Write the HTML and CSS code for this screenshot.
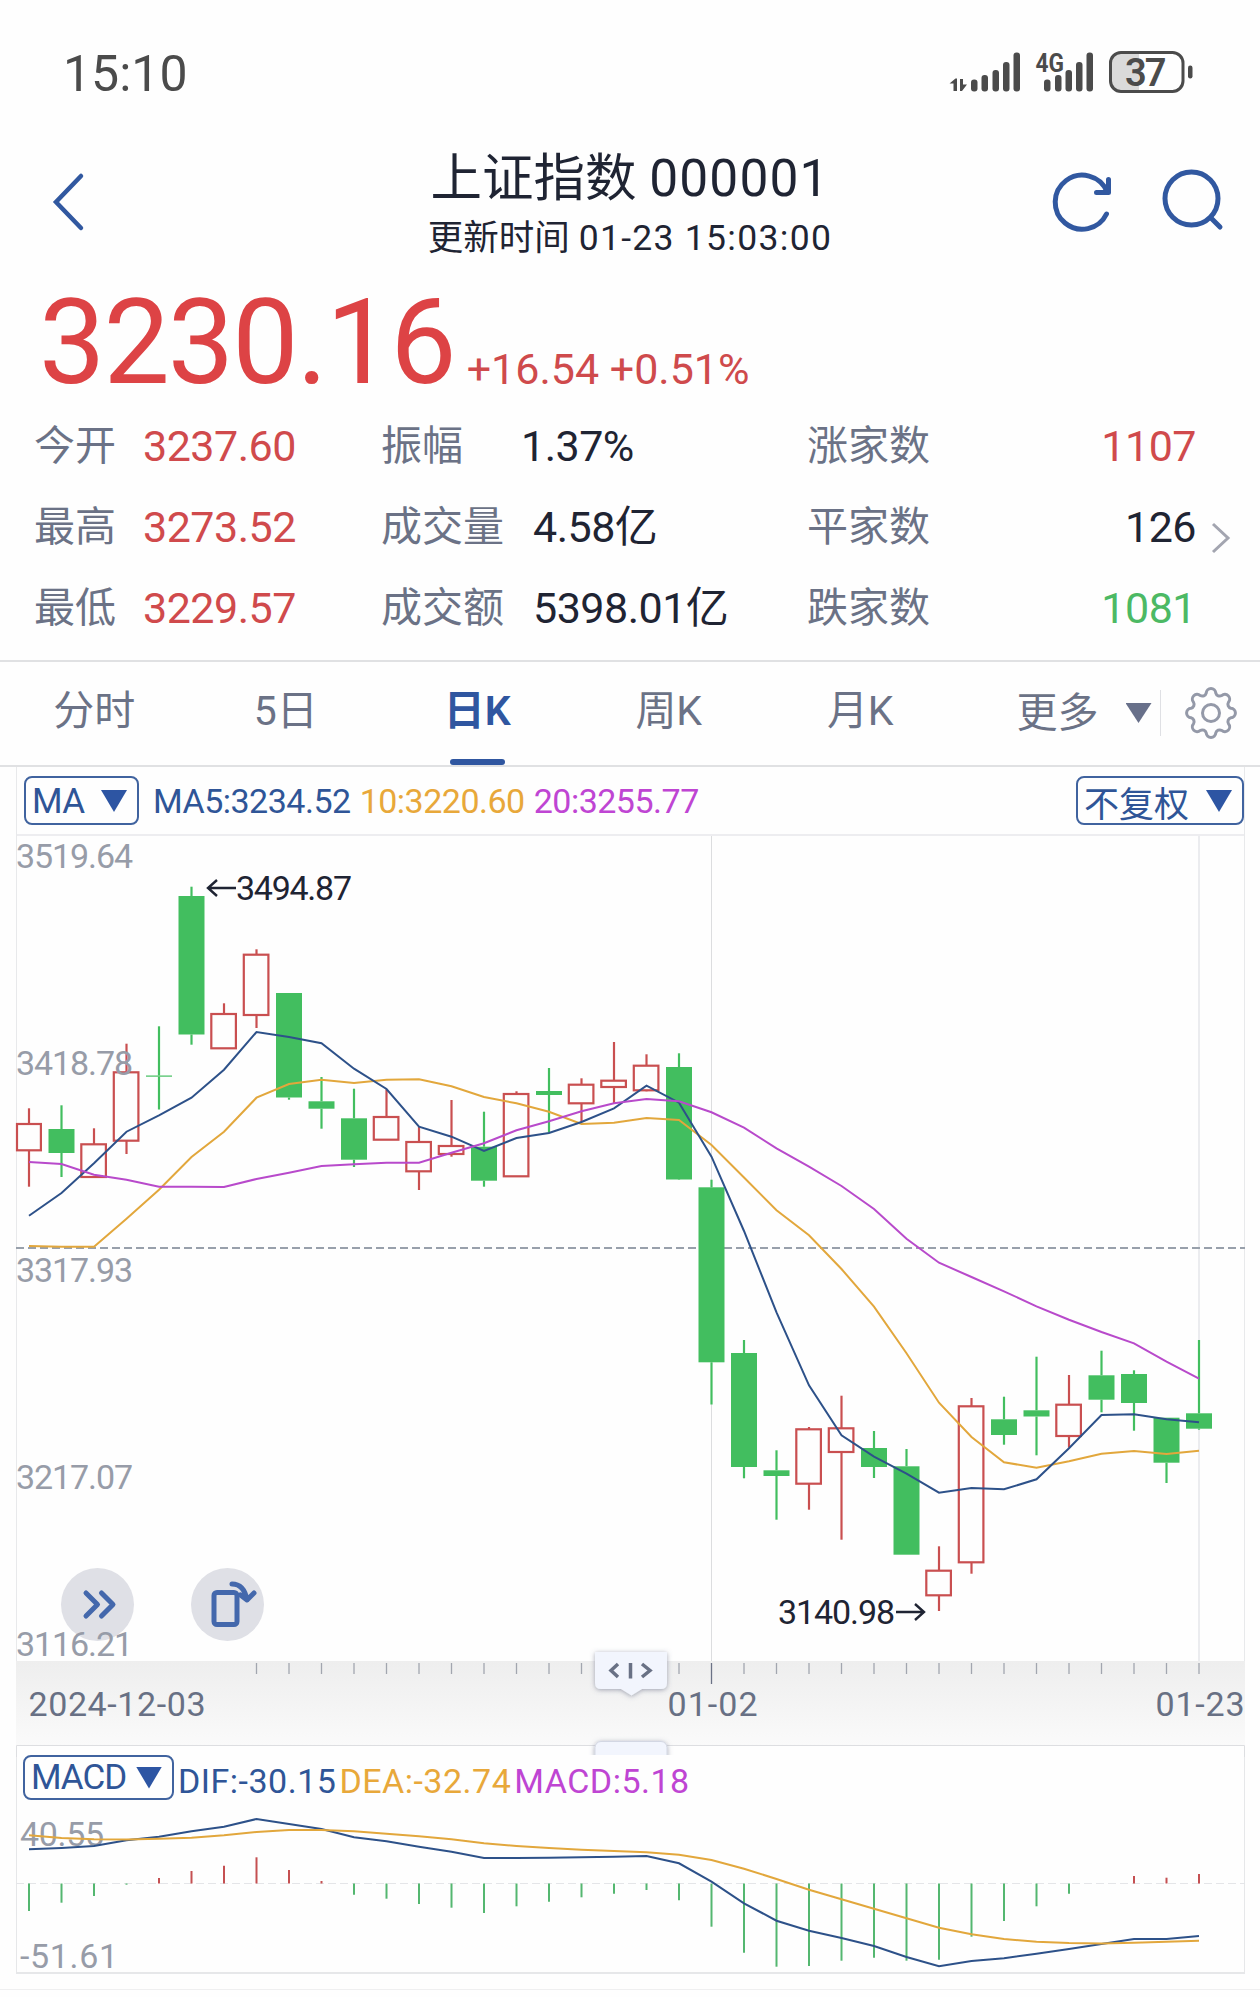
FILE: index.html
```html
<!DOCTYPE html>
<html lang="zh-CN">
<head>
  <meta charset="UTF-8">
  <title>上证指数 000001</title>
  <link rel="stylesheet" href="styles.css">
</head>
<body>
  <div class="status-bar">
    <span class="clock">15:10</span>
    <svg class="status-icons" width="250" height="50" viewBox="945 45 250 50">
      <g fill="#4b4b4b">
        <path d="M949.500 83.500 L955.5 78.5 H957 V91 H953.5 V83.5 Z M960 79 H963 V84.500 H967 L962 91 H960 Z"/>
        <rect x="971" y="79.500" width="6.500" height="12" rx="3"/>
        <rect x="981.500" y="75" width="6.500" height="16.500" rx="3"/>
        <rect x="992.500" y="70" width="6.500" height="21.500" rx="3"/>
        <rect x="1003" y="62" width="6.500" height="29.500" rx="3"/>
        <rect x="1013.500" y="52.500" width="6.500" height="39" rx="3"/>
        <rect x="1044" y="79.500" width="6.500" height="12" rx="3"/>
        <rect x="1055" y="75" width="6.500" height="16.500" rx="3"/>
        <rect x="1065.500" y="70" width="6.500" height="21.500" rx="3"/>
        <rect x="1076" y="62" width="6.500" height="29.500" rx="3"/>
        <rect x="1086.500" y="52.500" width="6.500" height="39" rx="3"/>
        <rect x="1188" y="65.500" width="4.500" height="13" rx="2.200"/>
      </g>
      <path d="M1121 52 H1139 V92 H1121 Q1110.500 92 1110.500 81 V63 Q1110.500 52 1121 52 Z" fill="#dadada"/>
      <rect x="1110.500" y="52.500" width="72.500" height="39" rx="10.500" fill="none" stroke="#4b4b4b" stroke-width="3"/>
      <text class="net" x="1035.500" y="71.500" textLength="28.500" lengthAdjust="spacingAndGlyphs">4G</text>
      <text class="battery" x="1125" y="85.500" textLength="41.500">37</text>
    </svg>
  </div>

  <div class="header">
    <svg class="back" width="34" height="58" viewBox="0 0 34 58"><path d="M30 3 L5 29 L30 55" fill="none" stroke="#3158a0" stroke-width="4.500" stroke-linecap="round"/></svg>
    <div class="title-box">
      <div class="title">上证指数 <span>000001</span></div>
      <div class="subtitle">更新时间 <span>01-23 15:03:00</span></div>
    </div>
    <svg class="header-icons" width="176" height="66" viewBox="1050 168 176 66" fill="none" stroke="#3158a0" stroke-width="5" stroke-linecap="round" stroke-linejoin="round">
      <path d="M1106.500 214 A27 27 0 1 1 1107 191.500 M1108.500 179.500 V192.500 H1096.500"/>
      <circle cx="1191.500" cy="198.500" r="26.500"/>
      <path d="M1211 218 L1220 227"/>
    </svg>
  </div>

  <div class="price">
    <span class="last">3230.16</span>
    <span class="change">+16.54 +0.51%</span>
  </div>

  <div class="quotes">
    <table class="quote-table">
      <tr><td class="c1">今开</td><td class="c2 up">3237.60</td><td class="c3">振幅</td><td class="c4 near">1.37%</td><td class="c5">涨家数</td><td class="c6 up">1107</td></tr>
      <tr><td class="c1">最高</td><td class="c2 up">3273.52</td><td class="c3">成交量</td><td class="c4">4.58亿</td><td class="c5">平家数</td><td class="c6">126</td></tr>
      <tr><td class="c1">最低</td><td class="c2 up">3229.57</td><td class="c3">成交额</td><td class="c4">5398.01亿</td><td class="c5">跌家数</td><td class="c6 down">1081</td></tr>
    </table>
    <svg class="more-arrow" width="22" height="34" viewBox="0 0 22 34"><path d="M3 3 L18 17 L3 31" fill="none" stroke="#a3a5b0" stroke-width="3"/></svg>
  </div>

  <div class="tabs">
    <div class="tab">分时</div>
    <div class="tab">5日</div>
    <div class="tab active">日K</div>
    <div class="tab">周K</div>
    <div class="tab">月K</div>
    <div class="tab-more">更多<i class="caret gray"></i></div>
    <svg class="gear" width="56" height="56" viewBox="-28 -28 56 56" fill="none" stroke="#9499a8" stroke-width="3" stroke-linejoin="round">
      <path id="gearPath"/>
      <circle r="8.500"/>
    </svg>
  </div>

  <div class="panel">
    <div class="legend">
      <div class="select">MA<i class="caret"></i></div>
      <span class="ma5">MA5:3234.52</span>
      <span class="ma10">10:3220.60</span>
      <span class="ma20">20:3255.77</span>
      <div class="select adjust">不复权<i class="caret"></i></div>
    </div>
    <div class="chart-box">
      <svg id="kline" class="kline" width="1229" height="825" viewBox="16 836 1229 825"></svg>
      <div class="round-btn fast">
        <svg width="35" height="31" viewBox="0 0 35 31"><path d="M4 4 L15.500 15.500 L4 27 M19.500 4 L31 15.500 L19.500 27"/></svg>
      </div>
      <div class="round-btn rotate">
        <svg width="56" height="62" viewBox="200 1574 56 62"><rect x="214" y="1592.500" width="23" height="32" rx="3"/><path d="M232 1584 Q244 1584 247 1600 M240.500 1595 L247 1600 L254 1593"/></svg>
      </div>
      <svg id="labels" class="labels" width="1229" height="825" viewBox="16 836 1229 825">
        <g class="axis-text">
          <text x="16" y="868" textLength="117">3519.64</text>
          <text x="16" y="1075" textLength="117">3418.78</text>
          <text x="16" y="1282" textLength="117">3317.93</text>
          <text x="16" y="1489" textLength="117">3217.07</text>
          <text x="16" y="1656" textLength="117">3116.21</text>
        </g>
        <g class="mark-text">
          <text x="236" y="900" textLength="116">3494.87</text>
          <text x="778" y="1624" textLength="117">3140.98</text>
        </g>
        <path class="mark-arrow" d="M236 888 H208 M217 880 L208 888 L217 896 M896 1612 H924 M915 1604 L924 1612 L915 1620"/>
      </svg>
    </div>
  </div>

  <svg id="timeAxis" class="time-axis" width="1229" height="96" viewBox="16 1661 1229 96">
    <defs>
      <linearGradient id="band" x1="0" y1="0" x2="0" y2="1">
        <stop offset="0" stop-color="#eeeeee"/>
        <stop offset="1" stop-color="#fafafa"/>
      </linearGradient>
    </defs>
    <rect x="16" y="1661" width="1229" height="84" fill="url(#band)"/>
    <g id="ticks"></g>
    <g class="date-text">
      <text x="28.500" y="1716" textLength="177">2024-12-03</text>
      <text x="667.500" y="1716" textLength="90">01-02</text>
      <text x="1155.500" y="1716" textLength="89">01-23</text>
    </g>
    <path d="M16.500 1757 V1745.500 H1244.500 V1757" fill="none" stroke="#dddee1"/>
  </svg>

  <div class="macd-panel">
    <div class="legend macd-legend">
      <div class="select">MACD<i class="caret"></i></div>
      <span class="ma5">DIF:-30.15</span>
      <span class="ma10">DEA:-32.74</span>
      <span class="ma20">MACD:5.18</span>
    </div>
    <svg id="macd" class="macd" width="1229" height="162" viewBox="16 1811 1229 162">
      <g class="axis-text">
        <text x="20" y="1846" textLength="84">40.55</text>
        <text x="20" y="1968" textLength="98">-51.61</text>
      </g>
    </svg>
    <svg class="handle" width="93" height="120" viewBox="584 1642 93 120">
      <defs>
        <filter id="soft" x="-20%" y="-30%" width="140%" height="170%"><feDropShadow dx="0" dy="1" stdDeviation="2.500" flood-color="#59607a" flood-opacity=".55"/></filter>
        <clipPath id="lower"><rect x="584" y="1730" width="93" height="25"/></clipPath>
      </defs>
      <path d="M595 1652 H667 V1683 Q667 1689 661 1689 H642 L631.500 1695.500 L621 1689 H601 Q595 1689 595 1683 Z" fill="#f2f5fd" filter="url(#soft)"/>
      <path d="M618 1664 L611 1670.500 L618 1677 M642 1664 L650 1670.500 L642 1677 M630.500 1663 V1678.500" fill="none" stroke="#697185" stroke-width="3.500"/>
      <g clip-path="url(#lower)"><rect x="595" y="1741.500" width="72" height="40" rx="6" fill="#f2f5fd" stroke="#d3d7e3" filter="url(#soft)"/></g>
    </svg>
  </div>
  <div class="footer-line"></div>

  <script src="chart.js"></script>
</body>
</html>
```
FILE: styles.css
```css
* {
  box-sizing: border-box;
}
body {
  margin: 0;
  width: 1260px;
  height: 1997px;
  overflow: hidden;
  background-color: #fefefe;
  font-family: Roboto, "Noto Sans CJK SC", sans-serif;
  color: #1f2433;
}
svg {
  display: block;
  overflow: visible;
}
.status-bar {
  display: flex;
  justify-content: space-between;
  height: 110px;
  padding: 45px 65px 0 63px;
}
.clock {
  font-size: 50px;
  line-height: 58px;
  color: #4b4b4b;
}
.net {
  font-size: 25px;
  font-weight: 700;
  fill: #4b4b4b;
}
.battery {
  font-size: 38px;
  font-weight: 600;
  fill: #4b4b4b;
}

/* header */
.header {
  display: grid;
  grid-template-columns: 1fr auto 1fr;
  height: 170px;
  padding: 36px 34px 0;
}
.back {
  margin: 27px 0 0 17px;
}
.title-box {
  text-align: center;
  white-space: nowrap;
}
.title {
  font-size: 51.5px;
  line-height: 66px;
}
.title span {
  letter-spacing: 1.1px;
}
.subtitle {
  font-size: 35.5px;
  line-height: 50px;
  margin-top: 1px;
}
.subtitle span {
  letter-spacing: 1.3px;
}
.header-icons {
  margin-top: 22px;
  justify-self: end;
}

.price {
  display: flex;
  align-items: baseline;
  height: 126px;
  padding-left: 39px;
}
.last {
  font-size: 118px;
  line-height: 126px;
  letter-spacing: -1.9px;
  color: #dd4345;
}
.change {
  position: relative;
  top: 1px;
  font-size: 43px;
  margin-left: 12px;
  color: #cf4a4c;
}

/* quote table */
.quotes {
  display: flex;
  align-items: center;
  height: 254px;
}
.quote-table {
  width: 1196px;
  height: 243px;
  margin-top: -12px;
  table-layout: fixed;
  border-collapse: collapse;
  font-size: 43px;
  line-height: 60px;
  letter-spacing: -0.5px;
  white-space: nowrap;
}
.quote-table td {
  padding: 0;
}
.quote-table .c1,
.quote-table .c3,
.quote-table .c5 {
  font-size: 41px;
  letter-spacing: 0;
  color: #6b7286;
}
.quote-table .c1 {
  width: 143px;
  padding-left: 34px;
}
.quote-table .c2 {
  width: 238px;
}
.quote-table .c3 {
  width: 152px;
}
.quote-table .c4 {
  width: 274px;
}
.quote-table .near {
  padding-right: 12px;
  text-indent: -12px;
}
.quote-table .c6 {
  text-align: right;
}
.quote-table .up {
  color: #d04a4c;
}
.quote-table .down {
  color: #4cb964;
}
.more-arrow {
  margin: 10px 0 0 14px;
}

/* period tabs */
.tabs {
  display: flex;
  height: 107px;
  border-top: 2px solid #e0e1e3;
  border-bottom: 2px solid #e0e1e3;
  font-size: 41px;
  line-height: 98px;
  color: #6b7286;
}
.tab {
  width: 191.5px;
  padding-right: 3px;
  text-align: center;
}
.tab.active {
  display: flex;
  flex-direction: column;
  align-items: center;
  color: #2f56a0;
  font-weight: 600;
}
.tab.active::after {
  content: "";
  width: 55px;
  height: 7px;
  margin-top: -1px;
  border-radius: 4px;
  background: #2f56a0;
}
.tab-more {
  display: flex;
  align-items: center;
  justify-content: space-between;
  width: 144px;
  height: 46px;
  margin: 28px 0 0 59px;
  padding-right: 8px;
  border-right: 1px solid #dfe0e4;
}
.gear {
  margin: 23px 0 0 22px;
}
.caret {
  width: 26px;
  height: 22px;
  background: #2d55a3;
  clip-path: polygon(0 0, 100% 0, 50% 100%);
}
.caret.gray {
  height: 20px;
  background: #68708a;
}

/* main chart */
.panel {
  width: 1229px;
  margin-left: 16px;
  border-left: 1px solid #e8e9eb;
  border-right: 1px solid #e8e9eb;
}
.legend {
  display: flex;
  align-items: center;
  height: 69px;
  border-bottom: 2px solid #ededf0;
  padding-left: 7px;
  font-size: 34px;
  letter-spacing: -0.5px;
  white-space: nowrap;
}
.select {
  display: flex;
  align-items: center;
  justify-content: space-between;
  width: 115px;
  height: 49px;
  margin-right: 14px;
  padding: 1px 10px 0 6px;
  border: 2px solid #40639f;
  border-radius: 8px;
  font-size: 35px;
  color: #2f5597;
}
.select.adjust {
  width: 168px;
  margin: 0 0 0 auto;
  letter-spacing: 0;
}
.ma5 {
  color: #2f5597;
}
.ma10 {
  margin-left: 9px;
  color: #e8a83a;
}
.ma20 {
  margin-left: 9px;
  color: #bf45d3;
}
.chart-box {
  position: relative;
  width: 1229px;
  height: 825px;
  margin-left: -1px;
}
.labels {
  position: absolute;
  left: 0;
  top: 0;
}
.round-btn {
  position: absolute;
  display: flex;
  align-items: center;
  justify-content: center;
  width: 73px;
  height: 73px;
  top: 732px;
  border-radius: 50%;
  background: #dfe0e6;
}
.round-btn svg {
  fill: none;
  stroke: #4468ac;
  stroke-width: 5;
  stroke-linecap: round;
  stroke-linejoin: round;
}
.fast {
  left: 45px;
  padding-left: 3px;
}
.rotate {
  left: 175px;
}
.axis-text {
  font-size: 34px;
  fill: #979ca8;
}
.mark-text {
  font-size: 34px;
  fill: #1f2433;
}
.mark-arrow {
  fill: none;
  stroke: #1f2433;
  stroke-width: 2.4;
}
.date-text {
  font-size: 34px;
  fill: #687084;
}
.time-axis {
  margin-left: 16px;
}

/* macd */
.macd-panel {
  position: relative;
  width: 1229px;
  height: 217px;
  margin-left: 16px;
  border: solid #e6e7e9;
  border-width: 0 1px 2px;
}
.macd-legend {
  height: 54px;
  padding: 0 0 6px 6px;
  border: 0;
  letter-spacing: 0.5px;
}
.macd-legend .select {
  width: 151px;
  height: 45px;
  margin: -8px 4px 0 0;
  letter-spacing: -1px;
}
.macd-legend .ma10,
.macd-legend .ma20 {
  margin-left: 3px;
}
.macd {
  margin-left: -1px;
}
.handle {
  position: absolute;
  left: 567px;
  top: -115px;
}
.footer-line {
  margin-top: 15px;
  height: 1px;
  background: #efeff0;
}
```
FILE: chart.js
```js
const NS = 'http://www.w3.org/2000/svg';
const GREEN = '#42be5f';
const RED = '#c94f50';
const x = i => 29 + i * 32.5;

function add(parent, tag, attrs) {
  const el = document.createElementNS(NS, tag);
  for (const k in attrs) el.setAttribute(k, attrs[k]);
  parent.appendChild(el);
  return el;
}

function line(parent, x1, y1, x2, y2, stroke, width, dash) {
  add(parent, 'line', { x1, y1, x2, y2, stroke, 'stroke-width': width, 'stroke-dasharray': dash || 'none' });
}

function curve(parent, ys, stroke) {
  const points = ys.map((y, i) => x(i) + ',' + y).join(' ');
  add(parent, 'polyline', { points, fill: 'none', stroke, 'stroke-width': 2 });
}

// up(1)/down(0), high, body top, body bottom, low
const candles = [
  [1, 1108.3, 1124, 1150.3, 1186.7], [0, 1105.3, 1129, 1153, 1177], [1, 1128.3, 1144.3, 1177, 1177],
  [1, 1043.7, 1072.3, 1140.7, 1154], [0, 1026.3, 1075.5, 1076.7, 1109.5], [0, 886.7, 896, 1034.5, 1044.7],
  [1, 1003.3, 1014, 1048.3, 1048.3], [1, 949.3, 954.7, 1015, 1028], [0, 993, 993, 1097.5, 1099.7],
  [0, 1077, 1101.3, 1108.7, 1128.7], [0, 1088.7, 1118.3, 1159.7, 1167], [1, 1089.3, 1117, 1139.7, 1139.7],
  [1, 1126.7, 1142, 1171.3, 1190], [1, 1100, 1146, 1154, 1156.7], [0, 1111.7, 1146.7, 1180.7, 1186.7],
  [1, 1091.3, 1094, 1176.3, 1177], [0, 1068, 1091, 1095, 1132.7], [1, 1078.3, 1084.7, 1103.3, 1122],
  [1, 1042, 1080.7, 1087, 1104], [1, 1054.3, 1065.7, 1090.3, 1091.3], [0, 1053.3, 1067, 1179.5, 1180],
  [0, 1179.7, 1187.3, 1362.3, 1404.5], [0, 1340, 1353, 1467, 1478.3], [0, 1450.3, 1470.3, 1476, 1519.7],
  [1, 1427, 1429.3, 1483.7, 1509.7], [1, 1395.7, 1428.3, 1452, 1539.7], [0, 1431, 1448, 1467, 1478],
  [0, 1449, 1466.3, 1554.7, 1554.7], [1, 1546.3, 1570.7, 1595.3, 1611], [1, 1398, 1406.3, 1562.3, 1573.7],
  [0, 1396.7, 1419.3, 1435, 1444.7], [0, 1356.7, 1410.3, 1416.5, 1455.3], [1, 1375, 1404.7, 1436, 1447.7],
  [0, 1350.7, 1375.3, 1399.7, 1412.3], [0, 1370.3, 1374, 1403, 1430.7], [0, 1417.7, 1417.7, 1462.7, 1483],
  [0, 1340, 1413.3, 1428.7, 1429.7]
];

const ma5 = [1215.7, 1193, 1163.3, 1131.7, 1115.3, 1097.7, 1069.7, 1032, 1037, 1043.3, 1068.7, 1089, 1126.7,
  1136.7, 1151, 1138, 1133, 1122, 1108.3, 1085.7, 1102.7, 1156.7, 1231, 1312.3, 1385.3, 1435.3, 1456.7,
  1473.7, 1492.7, 1488, 1489.3, 1479.3, 1448.3, 1415, 1414.3, 1419.3, 1422.3];
const ma10 = [1246, 1246.7, 1246.7, 1218.7, 1189.7, 1157, 1131.7, 1097.7, 1084, 1079.7, 1083, 1079.7, 1079.3,
  1086.3, 1097, 1103.3, 1111.7, 1124, 1122.7, 1118, 1120, 1145, 1177.5, 1210.3, 1235.3, 1269, 1306.7,
  1353.3, 1402.7, 1437, 1462.3, 1467.7, 1461.3, 1453.7, 1451, 1454, 1450.7];
const ma20 = [1162, 1164, 1174.7, 1179.7, 1186.7, 1186.7, 1187, 1179, 1172.7, 1166, 1164.3, 1162.7, 1162.7,
  1152.7, 1143.3, 1130.3, 1121.3, 1111.3, 1103.3, 1099, 1101.3, 1112.3, 1127.7, 1148.3, 1166.7, 1186, 1209,
  1238.7, 1262.7, 1277, 1291.3, 1306.3, 1319.7, 1332, 1343.3, 1361.7, 1378.7];

const kline = document.getElementById('kline');
line(kline, 711.5, 836, 711.5, 1661, '#dcdddf', 1);
line(kline, 1199, 836, 1199, 1661, '#ebecef', 2);
line(kline, 16, 1248, 1245, 1248, '#98a0ab', 2, '8 4');

candles.forEach(([up, high, top, bottom, low], i) => {
  const color = up ? RED : GREEN;
  if (top > high) line(kline, x(i), high, x(i), top, color, 2.2);
  if (low > bottom) line(kline, x(i), bottom, x(i), low, color, 2.2);
  if (up) {
    // the first body is cut by the left edge of the plot
    const left = Math.max(x(i) - 12.7, 17);
    add(kline, 'rect', { x: left, y: top, width: x(i) + 11.9 - left, height: bottom - top, fill: '#fefefe', stroke: color, 'stroke-width': 2.2 });
  } else {
    add(kline, 'rect', { x: x(i) - 13, y: top, width: 26, height: bottom - top, fill: color });
  }
});
curve(kline, ma10, '#e2a73c');
curve(kline, ma5, '#2d5189');
curve(kline, ma20, '#b84acb');

// time axis
const ticks = document.getElementById('ticks');
for (let i = 7; i < 37; i++) {
  const month = i === 21;
  line(ticks, x(i), 1663, x(i), month ? 1684 : 1674, month ? '#6b7286' : '#a2a6af', 1.3);
}

const dif = [1849.3, 1848, 1846, 1840.3, 1836.7, 1831.3, 1826.7, 1819, 1824, 1829, 1837.3, 1841.3, 1846.7,
  1851.7, 1858, 1858, 1857.8, 1857.3, 1856.7, 1856, 1863.3, 1881.7, 1903.3, 1920.7, 1930.7, 1938, 1946,
  1957, 1966.3, 1961, 1958.3, 1953.7, 1949, 1944, 1939, 1939, 1936];
const dea = [1835.3, 1838, 1839.3, 1839.5, 1838.7, 1837.7, 1835.3, 1832, 1830, 1830, 1831.3, 1833.7, 1836.3,
  1839.3, 1843.3, 1846, 1848, 1849.7, 1851, 1852.3, 1854.7, 1860, 1868.7, 1879, 1889.7, 1899.3, 1908.7,
  1918.3, 1927.7, 1934.3, 1939, 1941.7, 1943, 1943.5, 1942.7, 1941.7, 1940.7];
const bars = [1911, 1902.7, 1896, 1884.7, 1878, 1871, 1865.7, 1857.3, 1870, 1881, 1894.7, 1898.7, 1904,
  1907.7, 1913, 1906.3, 1901.7, 1897.3, 1893.7, 1890, 1900.3, 1926.7, 1952.7, 1966.7, 1966, 1960.7, 1957.7,
  1960.7, 1959.7, 1936.7, 1921, 1906.3, 1893.7, 1883.5, 1876, 1877.7, 1874];

const macd = document.getElementById('macd');
line(macd, 16, 1883.5, 1245, 1883.5, '#e4e5e8', 1, '8 4');
bars.forEach((y, i) => line(macd, x(i), 1883.5, x(i), y, y > 1883.5 ? '#54b770' : '#c55052', 2));
curve(macd, dif, '#2d5189');
curve(macd, dea, '#e2a73c');

// gear outline, eight rounded teeth
const polar = deg => {
  const t = (deg - 90) * Math.PI / 180;
  return (20.5 * Math.cos(t)).toFixed(2) + ' ' + (20.5 * Math.sin(t)).toFixed(2);
};
let d = 'M' + polar(-13.5);
for (let a = 0; a < 360; a += 45) {
  d += 'A4.8 4.8 0 0 1 ' + polar(a + 13.5) + 'A4 4 0 0 0 ' + polar(a + 31.5);
}
document.getElementById('gearPath').setAttribute('d', d + 'Z');
```
